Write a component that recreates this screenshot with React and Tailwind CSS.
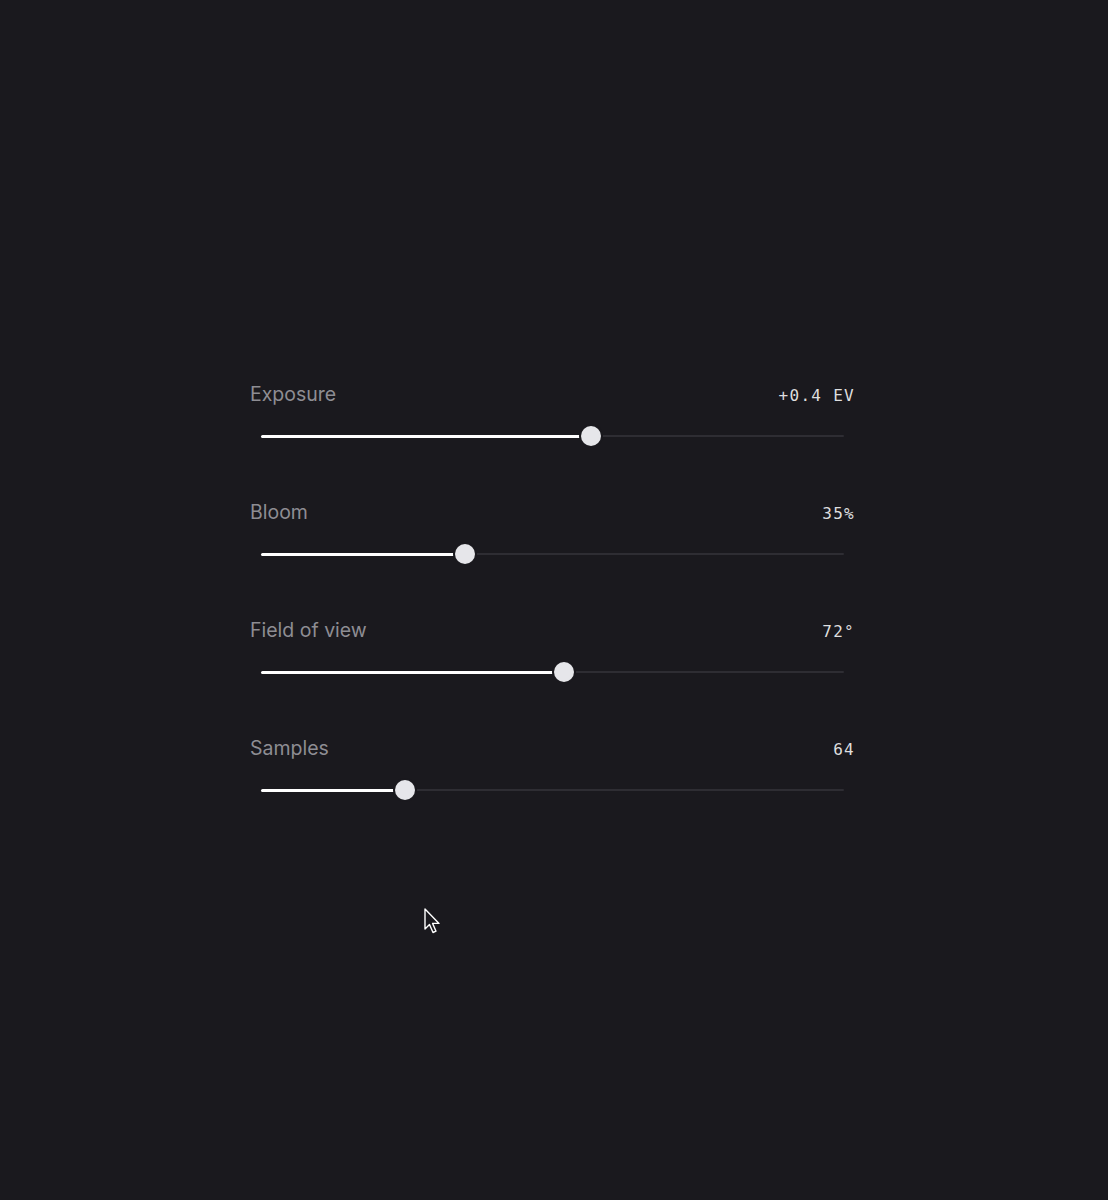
import React from "react";

const SLIDERS = [
    { label: "Exposure", value: "+0.4 EV", pct: 0.5667 },
    { label: "Bloom", value: "35%", pct: 0.35 },
    { label: "Field of view", value: "72°", pct: 0.52 },
    { label: "Samples", value: "64", pct: 0.247 },
];

const Slider = ({ label, value, pct }) => (
    <div className="flex flex-col gap-[20px]">
        <div className="flex h-[24px] items-center justify-between">
            <span className="pt-[2px] text-[19.5px] text-[#8e8d93]" style={{ fontFamily: "Inter, 'Noto Sans', sans-serif" }}>
                {label}
            </span>
            <span
                className="pt-[3px] text-[16px] tracking-[0.08em] text-[#dededf]"
                style={{ fontFamily: "'DejaVu Sans Mono', 'Liberation Mono', monospace" }}
            >
                {value}
            </span>
        </div>
        <div className="px-[11px]">
            <div className="flex h-[20px] items-center">
                <div className="h-[3px] rounded-l-full bg-white" style={{ width: `${pct * 100}%` }} />
                <div className="relative z-10 -mx-[10px] h-[20px] w-[20px] shrink-0 rounded-full bg-[#e6e6ea] ring-2 ring-[#1a191e]" />
                <div className="h-[2px] flex-1 rounded-r-full bg-[#2e2d33]" />
            </div>
        </div>
    </div>
);

export default function App() {
    return (
        <div className="relative min-h-[1200px] w-full bg-[#1a191e] pl-[250px] pt-[382px]">
            <div className="flex w-[605px] flex-col gap-[54px]">
                {SLIDERS.map((s) => (
                    <Slider key={s.label} {...s} />
                ))}
            </div>
            <svg
                className="absolute left-[423px] top-[907px]"
                width="20"
                height="30"
                viewBox="0 0 20 30"
            >
                <path
                    d="M2 2 L2 22 L6.5 17.5 L10 25.5 L13 24.2 L9.6 16.4 L16 16.4 Z"
                    fill="#1a191e"
                    stroke="#ffffff"
                    strokeWidth="1.4"
                    strokeLinejoin="round"
                />
            </svg>
        </div>
    );
}
